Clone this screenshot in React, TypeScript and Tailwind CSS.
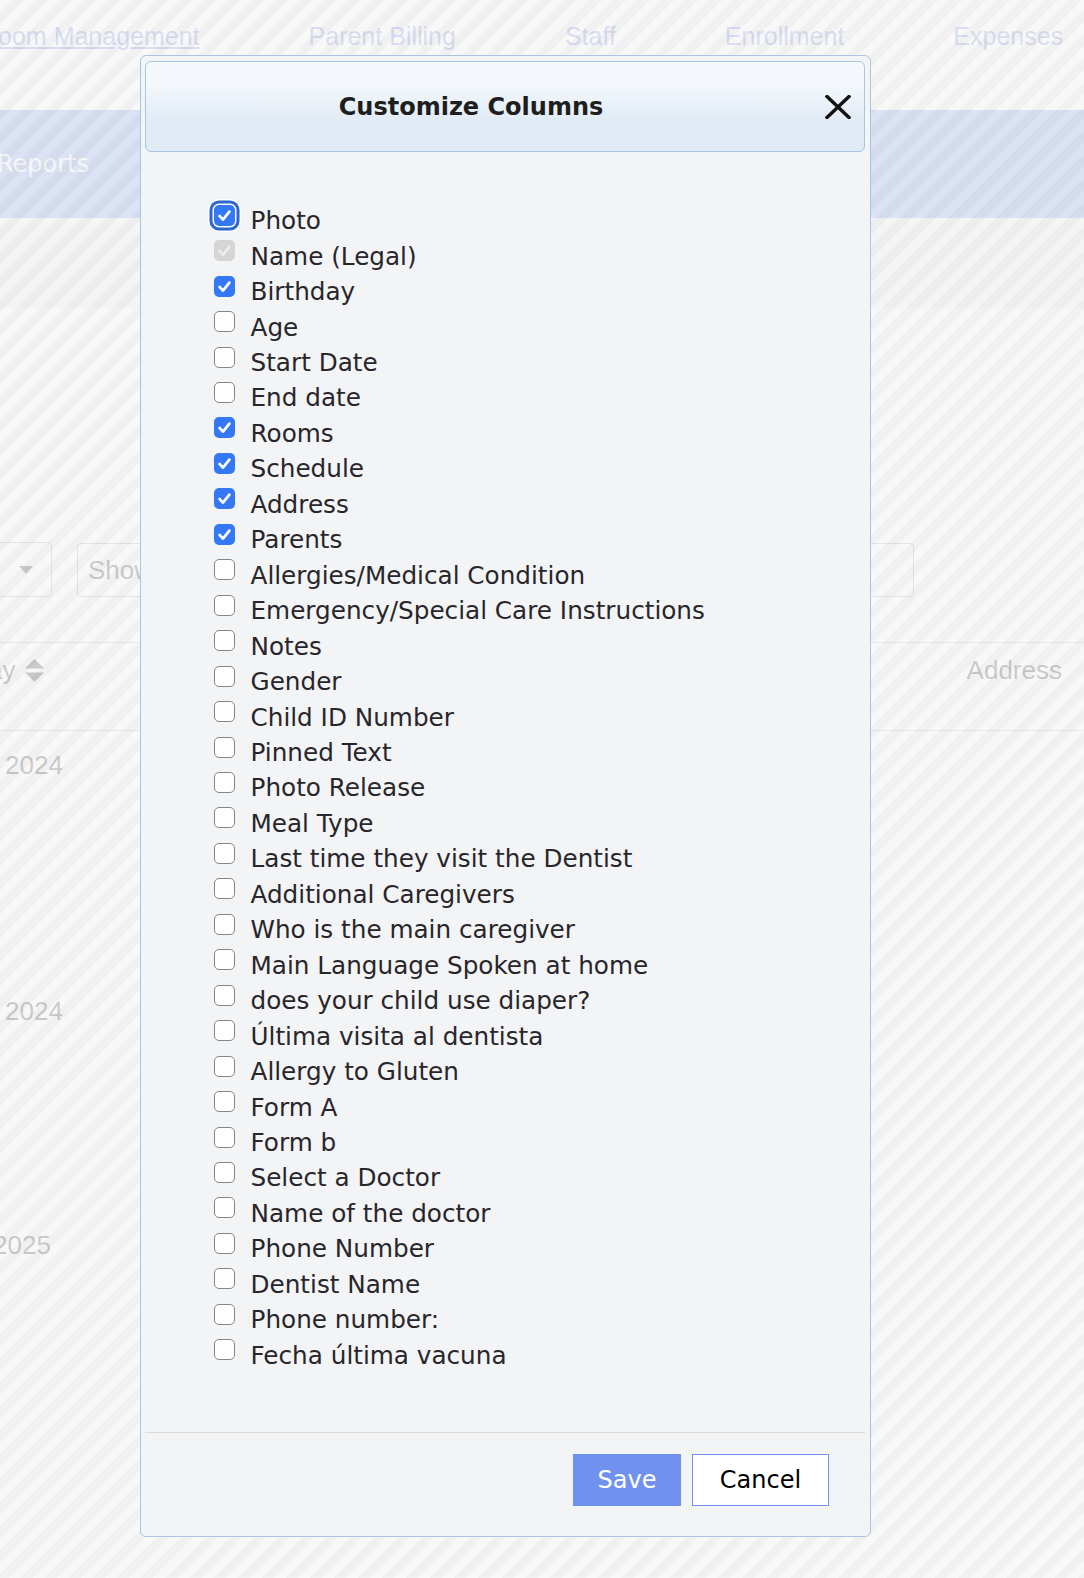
import React from 'react'

const columns: { label: string; state: 'on' | 'off' | 'locked' | 'focus' }[] = [
  { label: 'Photo', state: 'focus' },
  { label: 'Name (Legal)', state: 'locked' },
  { label: 'Birthday', state: 'on' },
  { label: 'Age', state: 'off' },
  { label: 'Start Date', state: 'off' },
  { label: 'End date', state: 'off' },
  { label: 'Rooms', state: 'on' },
  { label: 'Schedule', state: 'on' },
  { label: 'Address', state: 'on' },
  { label: 'Parents', state: 'on' },
  { label: 'Allergies/Medical Condition', state: 'off' },
  { label: 'Emergency/Special Care Instructions', state: 'off' },
  { label: 'Notes', state: 'off' },
  { label: 'Gender', state: 'off' },
  { label: 'Child ID Number', state: 'off' },
  { label: 'Pinned Text', state: 'off' },
  { label: 'Photo Release', state: 'off' },
  { label: 'Meal Type', state: 'off' },
  { label: 'Last time they visit the Dentist', state: 'off' },
  { label: 'Additional Caregivers', state: 'off' },
  { label: 'Who is the main caregiver', state: 'off' },
  { label: 'Main Language Spoken at home', state: 'off' },
  { label: 'does your child use diaper?', state: 'off' },
  { label: 'Última visita al dentista', state: 'off' },
  { label: 'Allergy to Gluten', state: 'off' },
  { label: 'Form A', state: 'off' },
  { label: 'Form b', state: 'off' },
  { label: 'Select a Doctor', state: 'off' },
  { label: 'Name of the doctor', state: 'off' },
  { label: 'Phone Number', state: 'off' },
  { label: 'Dentist Name', state: 'off' },
  { label: 'Phone number:', state: 'off' },
  { label: 'Fecha última vacuna', state: 'off' },
]

function Check({ color }: { color: string }) {
  return (
    <svg width="21" height="21" viewBox="0 0 21 21" fill="none">
      <path d="M5.6 11 L9 14.6 L15.4 6.6" stroke={color} strokeWidth="2.7" strokeLinecap="round" strokeLinejoin="round" />
    </svg>
  )
}

function Box({ state }: { state: 'on' | 'off' | 'locked' | 'focus' }) {
  if (state === 'off') {
    return <span className="mb-[11px] block h-[21px] w-[21px] shrink-0 rounded-[5px] border-[1.5px] border-[#858585] bg-white" />
  }
  if (state === 'locked') {
    return (
      <span className="mb-[11px] block h-[21px] w-[21px] shrink-0 rounded-[5px] bg-[#d5d5d5]">
        <Check color="#ececec" />
      </span>
    )
  }
  return (
    <span
      className={
        state === 'focus'
          ? 'mb-[11px] block h-[21px] w-[21px] shrink-0 rounded-[5px] bg-[#3478f6] shadow-[0_0_0_1.5px_#ffffff,0_0_0_4.5px_#2c66cf,0_0_0_6px_rgba(255,255,255,0.8)]'
          : 'mb-[11px] block h-[21px] w-[21px] shrink-0 rounded-[5px] bg-[#3478f6]'
      }
    >
      <Check color="#ffffff" />
    </span>
  )
}

function Page() {
  return (
    <div className="flex flex-col font-['Liberation_Sans',Arial,sans-serif]">
      <div className="h-[110px] pt-[20px]">
        <div className="-ml-[20px] flex gap-[109px] whitespace-nowrap text-[25px] leading-[32px] text-[#5f7ae0]">
          <span className="underline">Room Management</span>
          <span>Parent Billing</span>
          <span>Staff</span>
          <span>Enrollment</span>
          <span>Expenses</span>
        </div>
      </div>
      <div className="flex h-[108px] items-center bg-[#7092ec]">
        <div className="flex w-[89px] justify-end overflow-hidden">
          <span className="whitespace-nowrap font-['DejaVu_Sans',sans-serif] text-[24px] text-white">Reports</span>
        </div>
      </div>
      <div className="h-[90px] bg-[#eeeeee]" />
      <div className="mt-[234px] flex h-[56px] items-start">
        <div className="-ml-[10px] flex h-[55px] w-[62px] items-center justify-center rounded-[4px] border border-[#9a9a9a] pl-[10px]">
          <span className="block h-0 w-0 border-x-[7px] border-t-[8px] border-x-transparent border-t-[#222]" />
        </div>
        <div className="ml-[25px] mt-[1px] flex h-[54px] w-[837px] items-center rounded-[4px] border border-[#9a9a9a] pl-[10px] text-[26px] text-[#1a1a1a]">
          Show
        </div>
      </div>
      <div className="mt-[44px] flex h-[89px] items-start justify-between border-y border-[#b0b0b0] pt-[12px] text-[26px] leading-[30px] text-[#1a1a1a]">
        <div className="-ml-[80px] flex items-center whitespace-nowrap">
          <span>Birthday</span>
          <svg className="ml-[10px]" width="19" height="23" viewBox="0 0 19 23">
            <path d="M9.5 0 L19 9.5 H0 Z M0 13.5 H19 L9.5 23 Z" fill="#1a1a1a" />
          </svg>
        </div>
        <span className="pr-[22px]">Address</span>
      </div>
      <div className="h-[246px] pl-[5px] pt-[19px] text-[26px] leading-[30px] text-[#1a1a1a]">2024</div>
      <div className="h-[234px] pl-[5px] pt-[19px] text-[26px] leading-[30px] text-[#1a1a1a]">2024</div>
      <div className="-ml-[7px] h-[200px] pt-[19px] text-[26px] leading-[30px] text-[#1a1a1a]">2025</div>
    </div>
  )
}

export default function App() {
  return (
    <div className="relative h-[1578px] w-full overflow-hidden bg-white">
      <Page />

      <div className="absolute inset-0 z-10 bg-[repeating-linear-gradient(135deg,rgba(246,246,246,0.8)_0px,rgba(246,246,246,0.8)_8.5px,rgba(237,237,237,0.8)_8.5px,rgba(237,237,237,0.8)_17px)]" />

      <div className="absolute left-[140px] top-[55px] z-20 flex h-[1482px] w-[731px] flex-col rounded-[6px] border border-[#a9c5e4] bg-[#f3f4f6] pl-[4px] pr-[5px] pt-[5px] font-['DejaVu_Sans',sans-serif]">
        <div className="flex h-[91px] shrink-0 items-center rounded-[6px] border border-[#a9c5e4] bg-[linear-gradient(#f4f8fc_25%,#e1ebf5_65%)]">
          <h2 className="flex-1 text-center text-[24px] font-bold text-[#1e1e1e]">Customize Columns</h2>
          <div className="flex w-[68px] justify-end pr-[13px]">
            <svg width="26" height="24" viewBox="0 0 26 24">
              <path d="M2 1.5 L24 22.5 M24 1.5 L2 22.5" stroke="#111" strokeWidth="3.4" strokeLinecap="square" />
            </svg>
          </div>
        </div>

        <div className="flex flex-1 flex-col pl-[69px] pt-[51px]">
          {columns.map((c) => (
            <label key={c.label} className="flex h-[35.46px] items-center gap-[15.5px]">
              <Box state={c.state} />
              <span className="whitespace-nowrap text-[24.7px] text-[#28262b]">{c.label}</span>
            </label>
          ))}
        </div>

        <div className="border-t border-[#d9d9d9] pb-[30px] pt-[21px]">
          <div className="flex justify-end gap-[11px] pr-[36px]">
            <button className="h-[52px] w-[108px] bg-[#7092ee] text-[24px] text-white">Save</button>
            <button className="h-[52px] w-[137px] border border-[#7092ee] bg-white text-[24px] text-black">Cancel</button>
          </div>
        </div>
      </div>
    </div>
  )
}
